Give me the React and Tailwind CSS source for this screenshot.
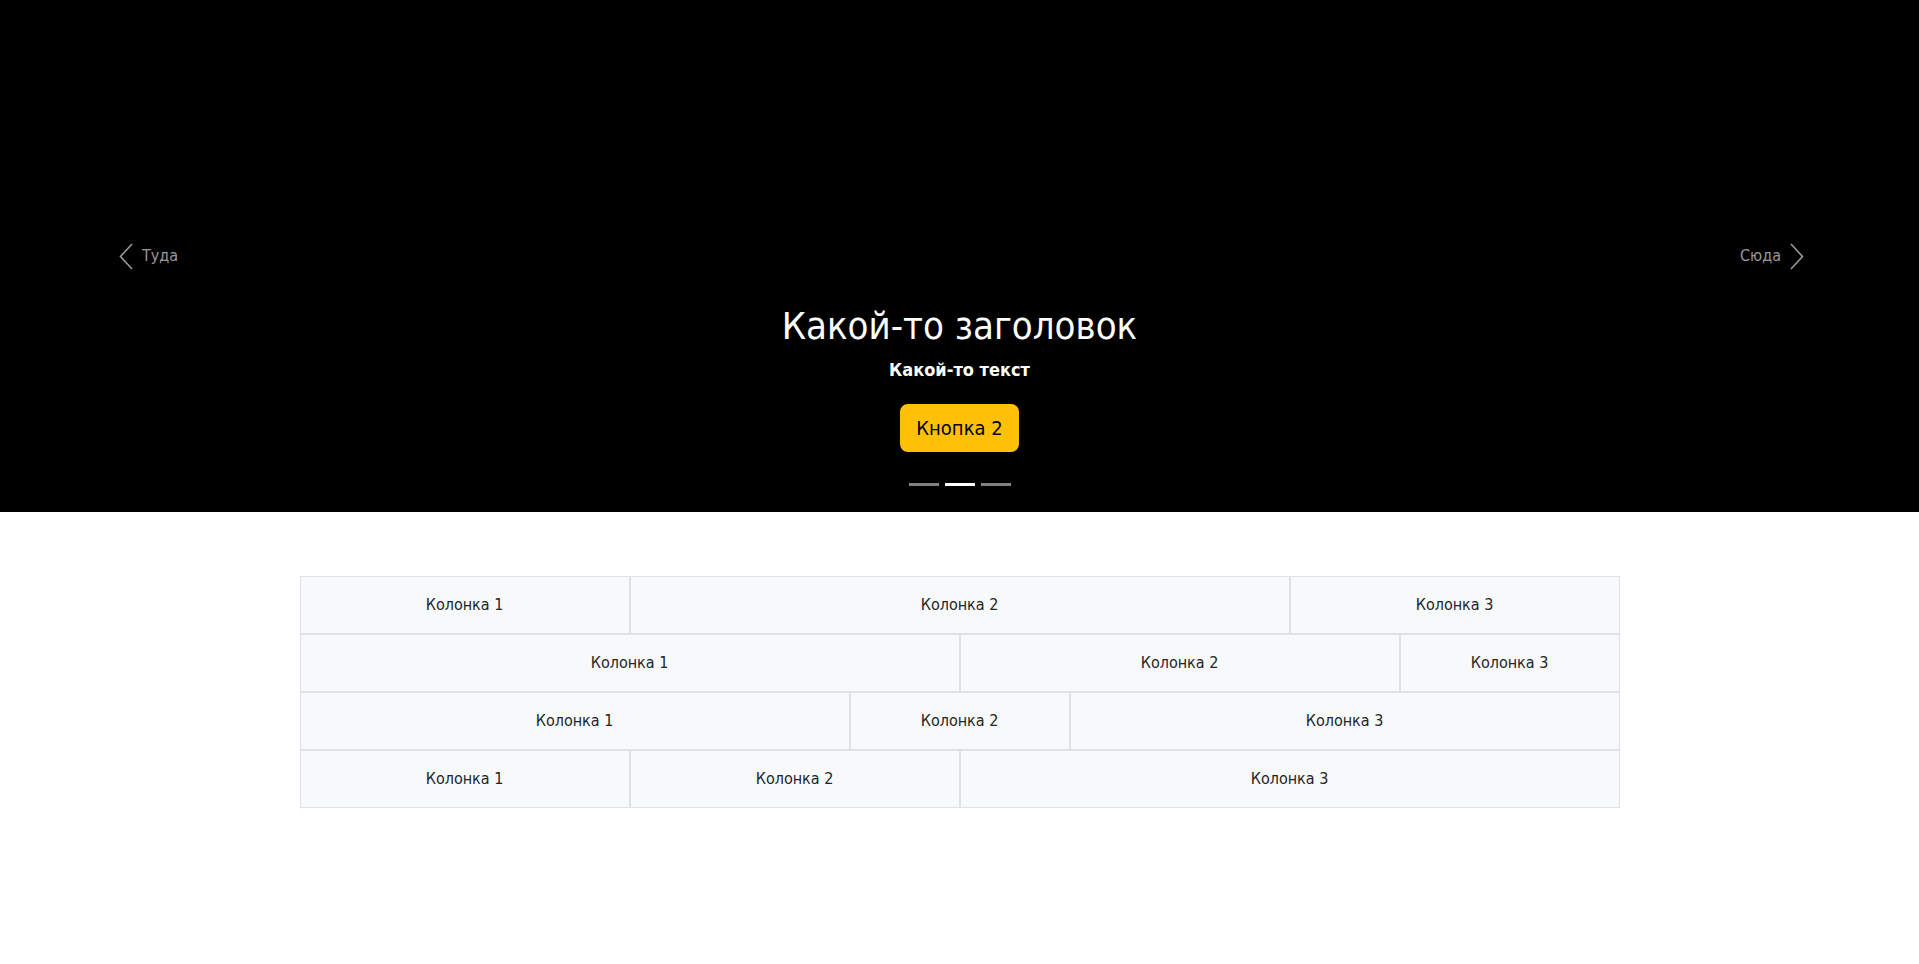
import React from "react";

const rows = [
  ["col-span-3", "col-span-6", "col-span-3"],
  ["col-span-6", "col-span-4", "col-span-2"],
  ["col-span-5", "col-span-2", "col-span-5"],
  ["col-span-3", "col-span-3", "col-span-6"],
];

function Chevron({ dir }) {
  return (
    <svg width="14" height="27" viewBox="0 0 14 27" fill="none">
      {dir === "left" ? (
        <path d="M13 1 L1.5 13.5 L13 26" stroke="currentColor" strokeWidth="1.6" />
      ) : (
        <path d="M1 1 L12.5 13.5 L1 26" stroke="currentColor" strokeWidth="1.6" />
      )}
    </svg>
  );
}

export default function App() {
  return (
    <div
      className="min-h-screen bg-white text-[#212529]"
      style={{ fontFamily: 'Tahoma, "DejaVu Sans Condensed", "Liberation Sans", sans-serif' }}
    >
      {/* carousel */}
      <div className="relative h-[512px] bg-black flex flex-col items-center pt-[303px]">
        <h1 className="text-[38px] leading-[46px] text-white">Какой-то заголовок</h1>
        <p className="mt-[6px] text-[18px] leading-[30px] font-bold text-white">Какой-то текст</p>
        <button className="mt-[19px] h-[48px] px-4 rounded-lg bg-[#ffc107] text-[20px] text-black">
          Кнопка 2
        </button>
        <div className="mt-[31px] flex gap-[6px]">
          <span className="block w-[30px] h-[3px] bg-white/50" />
          <span className="block w-[30px] h-[3px] bg-white" />
          <span className="block w-[30px] h-[3px] bg-white/50" />
        </div>

        <div className="absolute inset-0 flex items-center justify-between pl-[119px] pr-[115px] pointer-events-none">
          <button className="flex items-center gap-[9px] text-white/60 text-[16px] pointer-events-auto">
            <Chevron dir="left" />
            <span>Туда</span>
          </button>
          <button className="flex items-center gap-[9px] text-white/60 text-[16px] pointer-events-auto">
            <span>Сюда</span>
            <Chevron dir="right" />
          </button>
        </div>
      </div>

      {/* grid */}
      <div className="w-[1320px] mx-auto mt-16">
        {rows.map((row, i) => (
          <div key={i} className="grid grid-cols-12">
            {row.map((span, j) => (
              <div
                key={j}
                className={`${span} border border-[#dee2e6] bg-[#f8f9fa] py-4 text-center text-[16px] leading-6`}
              >
                Колонка {j + 1}
              </div>
            ))}
          </div>
        ))}
      </div>
    </div>
  );
}
